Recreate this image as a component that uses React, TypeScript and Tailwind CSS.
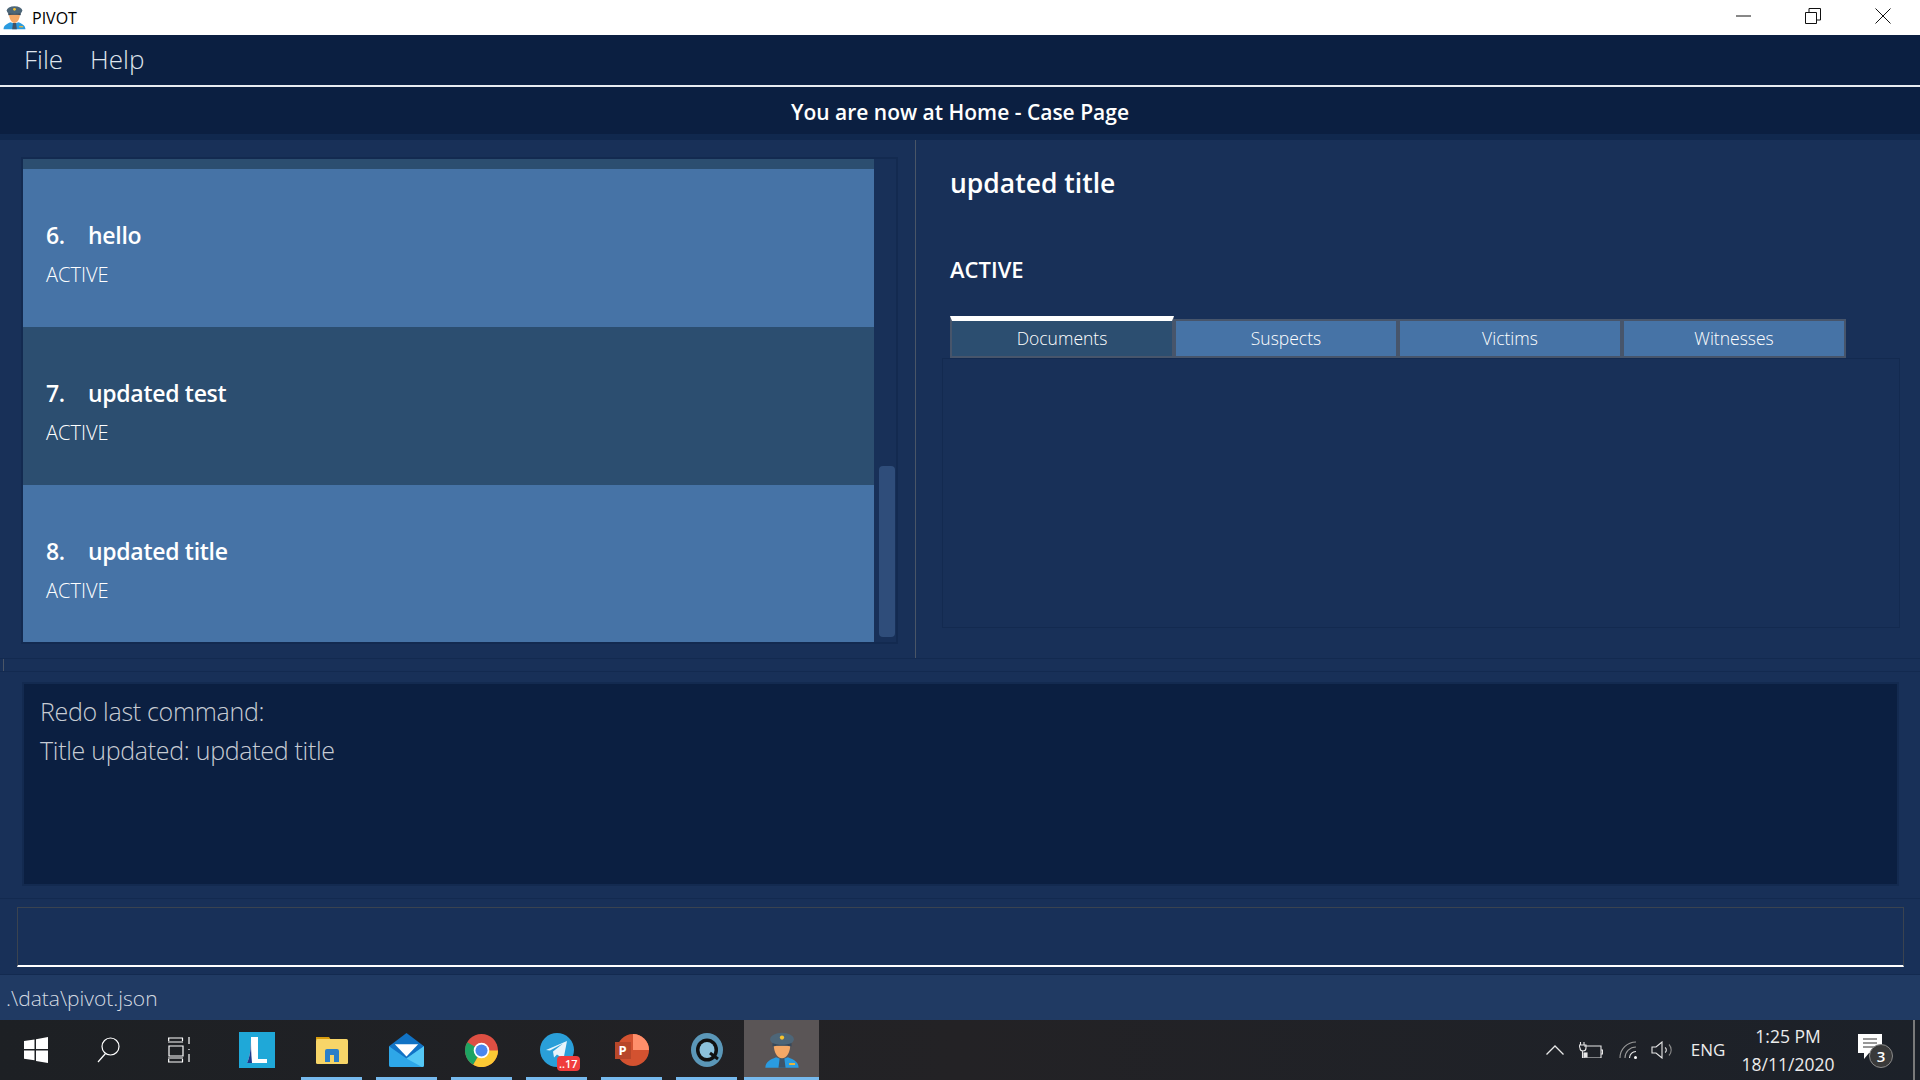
const font = { fontFamily: '"Open Sans", "Noto Sans", sans-serif' }

function Officer({ size = 24 }: { size?: number }) {
  return (
    <svg width={size} height={size} viewBox="0 0 32 32">
      <path d="M2 31c0-5 4-7 9-9l5 2 5-2c5 2 9 4 9 9z" fill="#2a9be0" />
      <path d="M14 23h4l1 8h-6z" fill="#3f5468" />
      <path d="M9 11c0 7 3 12 7 12s7-5 7-12z" fill="#f4a866" />
      <ellipse cx="16" cy="7" rx="10" ry="5.5" fill="#4d6678" />
      <path d="M8 10c4 2 12 2 16 0v3c-5-1-11-1-16 0z" fill="#37495a" />
      <circle cx="16" cy="5.5" r="1.8" fill="#f7c32e" />
      <rect x="22" y="27" width="5" height="1.6" fill="#f2b632" />
    </svg>
  )
}

function CaseCard({ num, title, dark }: { num: number; title: string; dark?: boolean }) {
  return (
    <div className={`h-[158px] shrink-0 pl-[23px] pt-[48px] text-white ${dark ? "bg-[#2c4e70]" : "bg-[#4673a6]"}`}>
      <div className="flex text-[23px] leading-[36px] font-semibold tracking-[-0.3px]">
        <span className="w-[42px]">{num}.</span>
        <span>{title}</span>
      </div>
      <div className="mt-[9px] text-[20px] leading-[26px] font-light">ACTIVE</div>
    </div>
  )
}

function Tab({ label, active }: { label: string; active?: boolean }) {
  return (
    <div
      className={`flex w-[224px] items-center justify-center border-2 border-[#47556b] text-[17.5px] font-light text-white ${
        active ? "h-[42px] border-t-[5px] border-t-white bg-[#2c4e70]" : "h-[39px] bg-[#4673a6]"
      }`}
    >
      {label}
    </div>
  )
}

function TaskItem({ children, running, active }: { children: React.ReactNode; running?: boolean; active?: boolean }) {
  return (
    <div className={`relative flex h-[60px] w-[75px] items-center justify-center ${active ? "bg-[#5a5556]" : ""}`}>
      {children}
      {running && (
        <div className={`absolute bottom-0 h-[3px] bg-[#76b9ed] ${active ? "inset-x-0" : "inset-x-[7px]"}`} />
      )}
    </div>
  )
}

export default function App() {
  return (
    <div className="flex h-[1080px] w-[1920px] flex-col overflow-hidden bg-[#183058]" style={font}>
      {/* Title bar */}
      <div className="flex h-[35px] shrink-0 items-center bg-white pl-[2px] text-black">
        <Officer size={25} />
        <span className="ml-[5px] text-[16px]">PIVOT</span>
        <div className="ml-auto flex items-center pb-[3px]">
          <svg width="16" height="16" viewBox="0 0 16 16" className="mr-[53px]">
            <path d="M0 8h15" stroke="#111" strokeWidth="1" />
          </svg>
          <svg width="16" height="16" viewBox="0 0 16 16" className="mr-[54px]">
            <path d="M.5 4.5h11v11H.5zM4 4V.5h11.5V12H12" fill="none" stroke="#111" />
          </svg>
          <svg width="16" height="16" viewBox="0 0 16 16" className="mr-[29px]">
            <path d="M.5.5l15 15M15.5.5l-15 15" stroke="#111" />
          </svg>
        </div>
      </div>

      {/* Menu */}
      <div className="flex h-[52px] shrink-0 items-center gap-[27px] border-b-2 border-[#e8ebf0] bg-[#0b1f41] pb-[1px] pl-[24px] text-[26px] font-light text-[#dfe4ec]">
        <span>File</span>
        <span>Help</span>
      </div>

      {/* Where you are */}
      <div className="flex h-[53px] shrink-0 items-center justify-center border-b-[6px] border-[#10284e] bg-[#0b1f41] pt-[5px] text-[21px] font-semibold text-white">
        You are now at Home - Case Page
      </div>

      {/* Main */}
      <div className="flex h-[518px] shrink-0">
        <div className="w-[915px] shrink-0 pl-[21px] pt-[17px]">
          <div className="flex h-[487px] w-[877px] border-2 border-[#132a50]">
            <div className="w-[851px] overflow-hidden bg-[#2c4e70] pt-[10px]">
              <CaseCard num={6} title="hello" />
              <CaseCard num={7} title="updated test" dark />
              <CaseCard num={8} title="updated title" />
            </div>
            <div className="flex flex-1 flex-col justify-end pb-[5px] pl-[5px] pr-[1px]">
              <div className="h-[171px] rounded-[4px] bg-[#2f4d7a]" />
            </div>
          </div>
        </div>
        <div className="w-px shrink-0 bg-[#4a5566]" />
        <div className="flex-1 pl-[26px] pt-[21px]">
          <div className="ml-[8px] text-[26.5px] leading-[44px] font-semibold text-white">updated title</div>
          <div className="ml-[8px] mt-[49px] text-[22px] leading-[30px] font-semibold text-white">ACTIVE</div>
          <div className="ml-[8px] mt-[32px] flex items-end">
            <Tab label="Documents" active />
            <Tab label="Suspects" />
            <Tab label="Victims" />
            <Tab label="Witnesses" />
          </div>
          <div className="h-[270px] w-[958px] border border-[#132a50]" />
        </div>
      </div>

      {/* Splitter */}
      <div className="h-[14px] shrink-0 border-y border-[#132a50] pl-[3px]">
        <div className="h-full w-px bg-[#4a5566]" />
      </div>

      {/* Result */}
      <div className="h-[224px] shrink-0 pl-[22px] pt-[10px]">
        <div className="h-[204px] w-[1877px] border-2 border-[#132a50] bg-[#0b1f41] pl-[16px] pt-[8px] text-[25px] leading-[39px] font-light tracking-[-0.3px] text-[#c7ccd4]">
          <div>Redo last command:</div>
          <div>Title updated: updated title</div>
        </div>
      </div>

      {/* Command box */}
      <div className="mt-[2px] h-[77px] shrink-0 border-y border-[#132a50] pl-[17px] pt-[8px]">
        <div className="h-[60px] w-[1887px] border-x border-t border-b-2 border-[#3a4350] border-b-white" />
      </div>

      {/* Status */}
      <div className="flex h-[45px] shrink-0 items-center bg-[#203a63] pl-[6px] pt-[2px] text-[21px] font-light text-[#d5dae2]">
        .\data\pivot.json
      </div>

      {/* Taskbar */}
      <div className="flex h-[60px] shrink-0 items-center bg-gradient-to-r from-[#1d2024] via-[#232225] to-[#1c2129] text-white">
        <div className="flex w-[72px] justify-center">
          <svg width="24" height="26" viewBox="0 0 24 26" fill="#fff">
            <path d="M0 4l10.5-1.6V12H0zM12 2.2L24 0v12H12zM0 13.5h10.5v9.8L0 21.8zM12 13.5h12V26l-12-2z" />
          </svg>
        </div>
        <div className="flex w-[72px] justify-center">
          <svg width="24" height="26" viewBox="0 0 24 26" fill="none" stroke="#fff" strokeWidth="1.2">
            <circle cx="14.5" cy="9.5" r="8.500" />
            <path d="M9.5 16.500L2 25" />
          </svg>
        </div>
        <div className="flex w-[72px] justify-center">
          <svg width="24" height="26" viewBox="0 0 24 26" fill="none" stroke="#fff" strokeWidth="1.2">
            <path d="M0 1h15M0 5h15M1 9h14v10H1zM0 21h15M0 25h15M21 0v7M21 12v1M21 17v8" />
            <path d="M.7 1v3M14.5 1v3M.7 22v3M14.5 22v3" />
          </svg>
        </div>
        <div className="ml-[3px] flex">
          <TaskItem>
            <svg width="36" height="36" viewBox="0 0 36 36">
              <rect width="36" height="36" fill="#1fa8d8" />
              <path d="M12 5h7v22h9v4H8c3-6 4-14 4-26z" fill="#fff" />
              <path d="M12 5c0 12-1 20-4 26h5c-1-10-1-18-1-26z" fill="#1b3a8c" />
            </svg>
          </TaskItem>
          <TaskItem running>
            <svg width="32" height="27" viewBox="0 4 32 27">
              <path d="M0 4h13l2 3h-15z" fill="#d89c0e" />
              <rect y="6" width="32" height="25" rx="1.5" fill="#f7d568" />
              <path d="M9 29V18a2 2 0 012-2h10a2 2 0 012 2v11h-5v-7h-4v7z" fill="#2a7fc9" />
            </svg>
          </TaskItem>
          <TaskItem running>
            <svg width="35" height="34" viewBox="0 0 36 36" preserveAspectRatio="none">
              <path d="M18 0l18 14v20a2 2 0 01-2 2H2a2 2 0 01-2-2V14z" fill="#1173c5" />
              <path d="M6 12h24L18 25z" fill="#fff" />
              <path d="M0 14l18 13 18-13v20a2 2 0 01-2 2H2a2 2 0 01-2-2z" fill="#2ea7e8" />
              <path d="M18 27l18-13v20a2 2 0 01-2 2z" fill="#55c8f5" />
            </svg>
          </TaskItem>
          <TaskItem running>
            <svg width="33" height="33" viewBox="0 0 34 34">
              <circle cx="17" cy="17" r="17" fill="#dd4f43" />
              <path d="M17 17L8.5 31.7A17 17 0 012.3 8.5z" fill="#1ea362" />
              <path d="M17 17h17a17 17 0 01-25.500 14.700z" fill="#fcc934" />
              <circle cx="17" cy="17" r="8" fill="#fff" />
              <circle cx="17" cy="17" r="6.200" fill="#4a87ee" />
            </svg>
          </TaskItem>
          <TaskItem running>
            <div className="relative h-[34px] w-[34px]">
              <svg width="34" height="34" viewBox="0 0 34 34">
                <circle cx="17" cy="17" r="17" fill="#2a9fd9" />
                <path d="M6 17L27 8l-3.500 18-6.500-4.500-3 3-1-6 10-8-13 7z" fill="#e8f4fb" />
              </svg>
              <div className="absolute -bottom-[4px] -right-[6px] rounded-[4px] bg-[#f03c3c] px-[2px] text-[11px] leading-[15px] font-semibold text-white">
                ..17
              </div>
            </div>
          </TaskItem>
          <TaskItem running>
            <div className="relative h-[34px] w-[34px]">
              <svg width="34" height="34" viewBox="0 0 34 34">
                <circle cx="18" cy="17" r="16" fill="#d35230" />
                <path d="M18 1a16 16 0 0116 16H18z" fill="#ff8f6b" />
              </svg>
              <div className="absolute left-0 top-[9px] flex h-[17px] w-[16px] items-center justify-center bg-[#b7472a] text-[13px] font-bold text-white">
                P
              </div>
            </div>
          </TaskItem>
          <TaskItem running>
            <svg width="32" height="34" viewBox="0 0 32 34">
              <ellipse cx="16" cy="17" rx="16" ry="17" fill="#5b97b8" />
              <ellipse cx="16" cy="17" rx="11" ry="11.500" fill="#111" />
              <ellipse cx="16" cy="17" rx="7.500" ry="8" fill="#8cc2dc" />
              <path d="M19 20l8 6" stroke="#111" strokeWidth="3" />
            </svg>
          </TaskItem>
          <TaskItem running active>
            <Officer size={38} />
          </TaskItem>
        </div>

        {/* Tray */}
        <div className="ml-auto flex items-center">
          <svg width="18" height="10" viewBox="0 0 18 10" fill="none" stroke="#e8e8e8" strokeWidth="1.300" className="mr-[15px]">
            <path d="M.5 9.500L9 1l8.500 8.500" />
          </svg>
          <svg width="24" height="16" viewBox="0 0 24 16" fill="none" stroke="#e8e8e8" strokeWidth="1.100" className="mr-[16px]">
            <path d="M5 4h17v12H5M22 8h1.500v4H22" />
            <path d="M1.500 0v3M5 0v3M0 3h7v3a3 3 0 01-6 0zM3.500 9v7H6" />
            <rect x="5" y="11" width="3" height="4" fill="#e8e8e8" />
          </svg>
          <svg width="19" height="18" viewBox="0 0 19 18" fill="none" stroke="#9a9a9a" strokeWidth="1.100" className="mr-[13px]">
            <path d="M1 17A16 16 0 0117 1" />
            <path d="M6 17A11 11 0 0117 6" />
            <path d="M10.500 17A6.500 6.500 0 0117 10.500" stroke="#e8e8e8" />
            <circle cx="16.500" cy="16.500" r="1.500" fill="#fff" stroke="none" />
          </svg>
          <svg width="23" height="18" viewBox="0 0 23 18" fill="none" stroke="#e8e8e8" strokeWidth="1.100" className="mr-[12px]">
            <path d="M1 6h4l6-5v16l-6-5H1z" />
            <path d="M14 6.500a3 3 0 010 5" />
            <path d="M18 3.500a8 8 0 010 11" stroke="#8a8a8a" />
          </svg>
          <span className="w-[44px] text-center text-[17px] text-[#ececec]">ENG</span>
          <div className="ml-[10px] w-[96px] text-center text-[17.5px] leading-[28px] text-[#ececec]">
            <div>1:25 PM</div>
            <div>18/11/2020</div>
          </div>
          <div className="relative ml-[22px] mr-[23px] h-[32px] w-[32px]">
            <svg width="24" height="26" viewBox="0 0 24 26" className="absolute left-0 top-0">
              <path d="M0 0h24v19H11l-5 6v-6H0z" fill="#fff" />
              <path d="M5 5h14M5 9h14M5 13h14" stroke="#333" strokeWidth="1.200" />
            </svg>
            <div className="absolute left-[11px] top-[10px] flex h-[24px] w-[24px] items-center justify-center rounded-full border border-[#8a8a8a] bg-[#3a3a3a] text-[15px] font-semibold text-white">
              3
            </div>
          </div>
          <div className="h-[60px] w-[2px] bg-[#7a7a7a]" />
          <div className="w-[5px]" />
        </div>
      </div>
    </div>
  )
}
